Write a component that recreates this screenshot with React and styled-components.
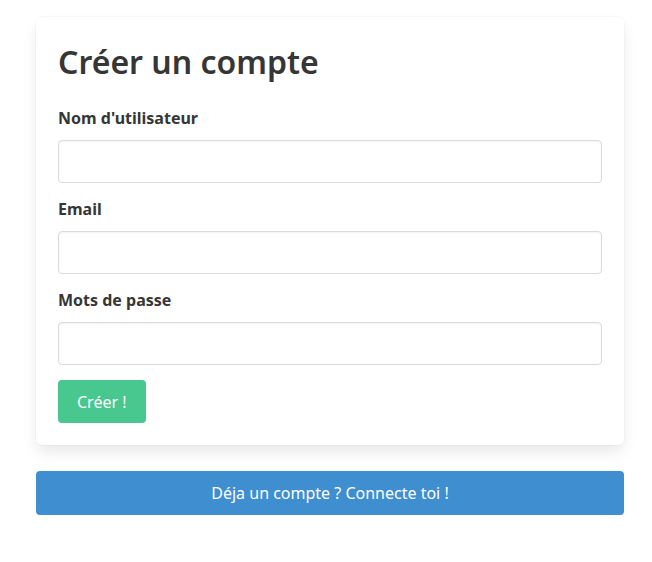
import styled, { createGlobalStyle } from "styled-components"

const Global = createGlobalStyle`
    html, body {
        margin: 0;
        padding: 0;
        background: #ffffff;
    }
    body {
        font-family: "Noto Sans", "Open Sans", sans-serif;
        color: #4a4a4a;
    }
    * {
        box-sizing: border-box;
    }
`

export default function App(){

    return(
        <>
            <Global />
            <Page>
                <Box>
                    <Title>Créer un compte</Title>
                    <Field>
                        <Label>Nom d'utilisateur</Label>
                        <Input type="text" />
                    </Field>
                    <Field>
                        <Label>Email</Label>
                        <Input type="email" />
                    </Field>
                    <Field>
                        <Label>Mots de passe</Label>
                        <Input type="password" />
                    </Field>
                    <Button color="#48c78e">Créer !</Button>
                </Box>
                <Button color="#3e8ed0" $wide>Déja un compte ? Connecte toi !</Button>
            </Page>
        </>
    )
}

const Page = styled.div`
    display: flex;
    flex-direction: column;
    gap: 26px;
    width: 588px;
    margin-left: 36px;
    padding-top: 17px;
`

const Box = styled.div`
    display: flex;
    flex-direction: column;
    align-items: flex-start;
    padding: 24px 22px 22px;
    background: #ffffff;
    border-radius: 6px;
    box-shadow: 0 8px 16px -2px rgba(10, 10, 10, 0.1), 0 0 0 1px rgba(10, 10, 10, 0.02);
`

const Title = styled.h1`
    margin: 0 0 23px;
    font-size: 32px;
    font-weight: 600;
    line-height: 42px;
    color: #363636;
`

const Field = styled.div`
    display: flex;
    flex-direction: column;
    width: 100%;
    margin-bottom: 14px;
`

const Label = styled.label`
    font-size: 16px;
    font-weight: 700;
    line-height: 24px;
    color: #363636;
    margin-bottom: 10px;
`

const Input = styled.input`
    width: 100%;
    height: 43px;
    border: 1px solid #dbdbdb;
    border-radius: 4px;
    box-shadow: inset 0 1px 2px rgba(10, 10, 10, 0.05);
    background: #ffffff;
    font-family: inherit;
    font-size: 16px;
    padding: 0 11px;
    outline: none;
`

const Button = styled.button`
    height: ${props => props.$wide ? "44px" : "43px"};
    width: ${props => props.$wide ? "100%" : "auto"};
    margin-top: ${props => props.$wide ? "0" : "1px"};
    padding: 0 19px;
    border: none;
    border-radius: 4px;
    background-color: ${props => props.color};
    color: #ffffff;
    font-family: inherit;
    font-size: 16px;
    font-weight: 400;
    cursor: pointer;
`
